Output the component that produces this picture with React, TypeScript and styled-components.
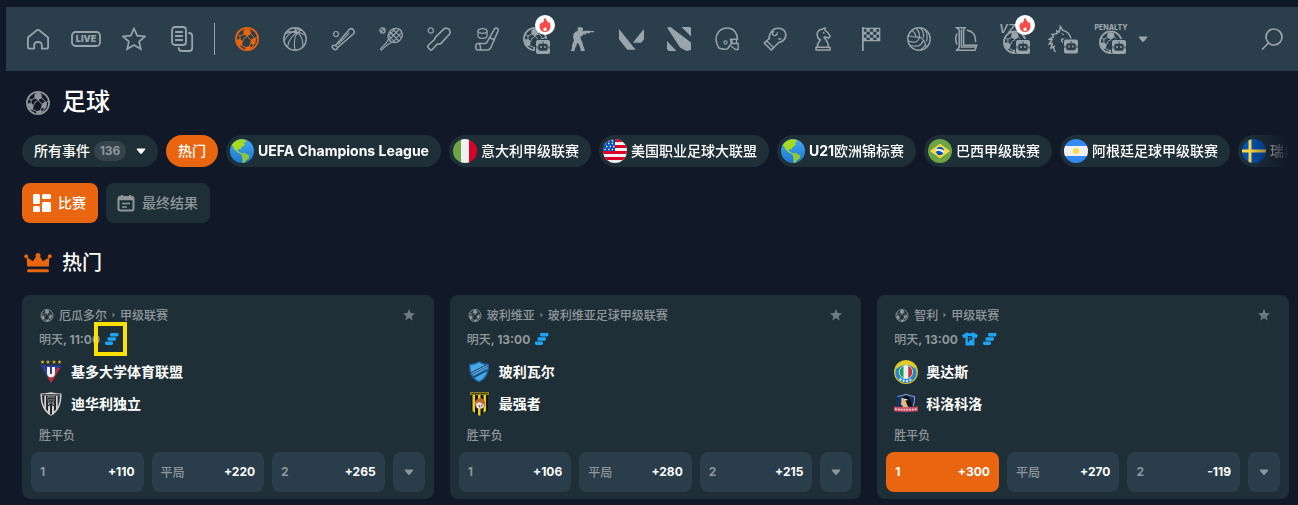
import React from 'react';
import styled, { createGlobalStyle, css } from 'styled-components';
import { SiValorant } from 'react-icons/si';

const color = {
  page: '#111827',
  bar: '#2a3f4b',
  card: '#1f2f38',
  control: '#2a3d4a',
  accent: '#e9650f',
  icon: '#9aa4ab',
  muted: '#8f979b',
  dim: '#6f7a80',
  blue: '#1ea4f7',
};

const GlobalStyle = createGlobalStyle`
  *, *::before, *::after { box-sizing: border-box; }
  body {
    margin: 0;
    background: ${color.page};
    color: #fff;
    font-family: Inter, "Noto Sans CJK SC", sans-serif;
    font-size: 14px;
  }
  h1, h2, p, ul { margin: 0; padding: 0; font-weight: 500; }
  button { font: inherit; color: inherit; border: 0; padding: 0; background: none; cursor: pointer; }
  a { color: inherit; text-decoration: none; }
  svg { display: block; flex: none; }
`;

const Page = styled.div`
  padding: 7px 0 6px 6px;
`;

const NavBar = styled.nav`
  display: flex;
  align-items: center;
  height: 64px;
  padding: 0 2px 0 8px;
  background: ${color.bar};
  color: ${color.icon};
`;

const NavItem = styled.a<{ $active?: boolean }>`
  position: relative;
  display: flex;
  align-items: center;
  justify-content: center;
  flex: none;
  width: 48px;
  height: 48px;
  color: ${(p) => (p.$active ? color.accent : color.icon)};
`;

const NavDivider = styled.span`
  flex: none;
  width: 1px;
  height: 32px;
  margin: 0 8px;
  background: ${color.icon};
`;

const NavMore = styled.button`
  display: flex;
  justify-content: center;
  flex: none;
  width: 16px;
`;

const NavSearch = styled.button`
  display: flex;
  align-items: center;
  justify-content: center;
  width: 48px;
  height: 48px;
  margin-left: auto;
`;

const HotBadge = styled.span`
  position: absolute;
  top: 0;
  right: 4px;
  display: flex;
  align-items: center;
  justify-content: center;
  width: 20px;
  height: 20px;
  border-radius: 50%;
  background: #fff;
`;

const Main = styled.main`
  padding: 0 9px 0 16px;
`;

const TitleRow = styled.div<{ $section?: boolean }>`
  display: flex;
  align-items: center;
  gap: 8px;
  height: ${(p) => (p.$section ? '40px' : '64px')};
  color: ${color.muted};
`;

const TitleIcon = styled.span`
  display: flex;
  justify-content: center;
  width: 32px;
`;

const PageTitle = styled.h1`
  color: #fff;
  font-size: 24px;
  line-height: 32px;
  padding-bottom: 2px;
`;

const SectionTitle = styled.h2`
  color: #fff;
  font-size: 20px;
  line-height: 28px;
`;

const Label = styled.span`
  padding-bottom: 2px;
`;

const ChipRow = styled.div`
  display: flex;
  gap: 8px;
  overflow: hidden;
  mask-image: linear-gradient(to right, #000 calc(100% - 40px), transparent 100%);
`;

const Chip = styled.button<{ $active?: boolean; $icon?: boolean }>`
  display: flex;
  align-items: center;
  gap: 4px;
  flex: none;
  height: 32px;
  padding: ${(p) => (p.$icon ? '0 12px 0 4px' : '0 12px')};
  border-radius: 16px;
  background: ${(p) => (p.$active ? color.accent : color.card)};
  font-weight: 500;
  white-space: nowrap;
`;

const Latin = styled.span`
  font-weight: 700;
`;

const Count = styled.span`
  width: 32px;
  margin-right: 6px;
  border-radius: 10px;
  background: #35434c;
  color: ${color.muted};
  font-weight: 700;
  font-size: 12px;
  line-height: 20px;
  text-align: center;
`;

const TabRow = styled.div`
  display: flex;
  gap: 8px;
  margin: 16px 0 20px;
`;

const Tab = styled.button<{ $active?: boolean }>`
  display: flex;
  align-items: center;
  gap: 4px;
  height: 40px;
  padding: 0 12px 0 8px;
  border-radius: 8px;
  background: ${(p) => (p.$active ? color.accent : color.card)};
  color: ${(p) => (p.$active ? '#fff' : color.muted)};
  font-weight: 500;
`;

const CardGrid = styled.div`
  display: grid;
  grid-template-columns: repeat(3, minmax(0, 1fr));
  gap: 16px;
  margin-top: 12px;
`;

const CardBox = styled.article`
  padding: 8px 9px 7px;
  border-radius: 8px;
  background: ${color.card};
`;

const CardBody = styled.div`
  padding: 0 8px;
`;

const MetaRow = styled.div`
  display: flex;
  align-items: center;
  gap: 4px;
  height: 24px;
  color: ${color.muted};
  font-size: 12px;
  font-weight: 500;
`;

const League = styled.a`
  display: flex;
  align-items: center;
  gap: 4px;
`;

const StarButton = styled.button`
  display: flex;
  margin: 0 2px 0 auto;
  color: ${color.dim};
`;

const Time = styled.span`
  font-weight: 700;
`;

const Marker = styled.span<{ $highlight?: boolean }>`
  position: relative;
  display: flex;
  padding-left: 1px;
  ${(p) =>
    p.$highlight &&
    css`
      &::after {
        content: '';
        position: absolute;
        inset: -11px -8px -11px -10px;
        border: 4px solid #ffe100;
      }
    `}
`;

const Team = styled.div`
  display: flex;
  align-items: center;
  gap: 8px;
  height: 32px;
  font-weight: 600;
`;

const Teams = styled.div`
  margin: 5px 0 4px;
`;

const MarketName = styled.p`
  color: ${color.muted};
  font-size: 12px;
  line-height: 24px;
  margin-bottom: 4px;
`;

const OddsRow = styled.div`
  display: grid;
  grid-template-columns: repeat(3, minmax(0, 1fr)) 32px;
  gap: 8px;
`;

const OddsButton = styled.button<{ $active?: boolean }>`
  display: flex;
  align-items: center;
  justify-content: space-between;
  height: 40px;
  padding: 0 9px;
  border-radius: 8px;
  background: ${(p) => (p.$active ? color.accent : color.control)};
  color: ${(p) => (p.$active ? '#fff' : color.muted)};
  font-size: 12px;
`;

const Outcome = styled(Label)<{ $digit?: boolean }>`
  font-weight: ${(p) => (p.$digit ? 700 : 500)};
`;

const Price = styled(Label)`
  color: #fff;
  font-weight: 700;
`;

const MoreButton = styled.button`
  display: flex;
  align-items: center;
  justify-content: center;
  height: 40px;
  border-radius: 8px;
  background: ${color.control};
  color: ${color.muted};
`;

/* ---------- icons ---------- */

const BallShape = () => (
  <g>
    <circle cx="12" cy="12" r="11.100" fill="none" stroke="currentColor" strokeWidth="1.700" />
    <path
      fill="currentColor"
      d="M8.600 3 12 1.500 15.400 3l.6 4-3.800 2.300L8.300 7.200zM1.500 12.500l4-.6 2.300 2.800-1 4-3.600.3zM15.800 13l3.200-2.600 2 1.600-.5 4.300-2 1.800-3.200-1.600zM10 20.200l4.600-1.300 2.600 1.500-3.200 2.400-3.400-.2z"
    />
    <path
      fill="none"
      stroke="currentColor"
      strokeWidth="1"
      d="M8.600 7.200 5 9v3M5 9 2.200 7.500M16 7l3.200 3.600M20 11.500l2.500-1.500M12.200 9.300 15.800 13M7.600 14.500 9.300 11l3-1.700M6.500 18.500l4 1.800M15.500 16.300l-1 3M18.500 17.800l-1.500 2.700"
    />
  </g>
);

const Ball = ({ size = 24 }: { size?: number }) => (
  <svg width={size} height={size} viewBox="0 0 24 24">
    <BallShape />
  </svg>
);

const Line = ({ children, w = 1.5 }: { children: React.ReactNode; w?: number }) => (
  <svg
    width="24"
    height="24"
    viewBox="0 0 24 24"
    fill="none"
    stroke="currentColor"
    strokeWidth={w}
    strokeLinejoin="round"
    strokeLinecap="round"
  >
    {children}
  </svg>
);

const HomeIcon = () => (
  <Line w={1.8}>
    <path d="M1.900 10.500 10.300 3.600q1.700-1.400 3.400 0l8.400 6.900V20q0 1.600-1.600 1.600h-4.700V18q0-3-3.800-3t-3.800 3v3.600H3.500q-1.600 0-1.600-1.600z" />
  </Line>
);

const LiveIcon = () => (
  <svg width="30" height="16" viewBox="0 0 30 16">
    <rect x="1" y="1" width="28" height="14" rx="3.500" fill="none" stroke="currentColor" strokeWidth="1.800" />
    <text x="15" y="11.200" textAnchor="middle" fontFamily="Inter, sans-serif" fontSize="9" fontWeight="900" fill="currentColor">
      LIVE
    </text>
  </svg>
);

const StarOutline = () => (
  <Line w={1.7}>
    <path d="m12 1.500 3.200 7.100 7.800.8-5.900 5.100 1.700 7.500L12 18l-6.800 4 1.700-7.500L1 9.400l7.800-.8z" strokeLinejoin="miter" />
  </Line>
);

const SlipsIcon = () => (
  <svg width="24" height="26" viewBox="0 0 24 26" fill="none" stroke="currentColor" strokeWidth="1.800" strokeLinecap="round">
    <rect x="2" y="1" width="14" height="18" rx="3" />
    <path d="M5.800 6h6.400M5.800 10h6.400M5.800 14h6.400M19 7q3.200 0 3.200 3v12q0 3-3 3h-7.500q-3 0-3-3" />
  </svg>
);

const BasketballIcon = () => (
  <Line w={1.4}>
    <circle cx="12" cy="12" r="11.200" />
    <path
      d="M3 6.500Q12 2 22 8M1 14Q6 4 17 2.200M4.500 20Q6 9 18.500 3M12 23Q10 12 14 6.500L12 1M15 6Q20 10 20 19.500M5 4.500q6 .5 9.500 2"
      strokeWidth="1.100"
    />
  </Line>
);

const BaseballIcon = () => (
  <Line>
    <circle cx="5" cy="7" r="2.500" strokeWidth="1.200" />
    <path d="M4.500 18.500 18.300 2.500q2-1.800 4 .2t.2 4L7 20.200q-1 2.600-2.700 2.600-.8 0-2-1.200T1 19.500q0-1.500 3.500-1z" />
    <path d="m4.500 18.500 2.500 2M7.500 17.200l10.500-11" strokeWidth="1.100" />
  </Line>
);

const TennisIcon = () => (
  <Line w={1.3}>
    <circle cx="3.500" cy="3.500" r="2.600" />
    <path d="m2 5 3-3" />
    <ellipse cx="16.200" cy="8.500" rx="7.500" ry="6.700" transform="rotate(-42 16.200 8.500)" />
    <path
      d="M9.300 12.500q-1.300 3.500-8 9.300l1.200 1.300q6-6.200 9.600-7.400M10 9l6 6.500M11.500 5.500l8 8M14.500 2.800l7.500 7.500M22 6l-8 9.300M19.500 3l-9 9.500M16 1.800l-6 6.500"
      strokeWidth="1.100"
    />
  </Line>
);

const CricketIcon = () => (
  <Line w={1.6}>
    <circle cx="3.800" cy="3.500" r="2.600" strokeWidth="1.200" />
    <path d="M8.200 10.500 17 1.900q1-.9 2.400-.6l2.600.8 1.100 2.600q.4 1.500-.7 2.600L14 16.400q-1 .9-2.300.7l-1.500-.1-4.700 5.200q-1.200 1.200-2.500.3L1 20.500q-.6-1.400.5-2.500l6-5.500z" />
  </Line>
);

const HockeyIcon = () => (
  <Line w={1.5}>
    <path d="M20 1.200q1.600-.5 2.700.4t.3 2.500L16.500 19q-1.300 4-4.500 4H3q-2.300 0-2.300-3.500T4 16.500h6.500q1 0 1.500-1.300zM4 16.500q2 2 1.500 6.300M15 11l4 1.500" />
    <ellipse cx="7.500" cy="4" rx="4.500" ry="2.300" strokeWidth="1.200" />
    <path d="M3 4v5q0 2.300 4.500 2.300T12 9V4" strokeWidth="1.200" />
  </Line>
);

const BotShape = () => (
  <g>
    <rect x="13.500" y="12.500" width="15" height="15" rx="2.500" fill={color.bar} />
    <rect x="14.500" y="13.500" width="14" height="14" rx="2" fill="currentColor" />
    <rect x="16.800" y="17.300" width="9.400" height="7" rx="1.800" fill={color.bar} />
    <path d="M21.500 15v2.500M15.600 19.500v2.600M27.400 19.500v2.600" stroke={color.bar} />
    <path d="M19.600 19.500v2M23.400 19.500v2" stroke="currentColor" strokeWidth="1.400" />
  </g>
);

const BotBallIcon = () => (
  <svg width="32" height="30" viewBox="-4 -3 32 30">
    <BallShape />
    <g transform="translate(-1.500 -.5)">
      <BotShape />
    </g>
  </svg>
);

const TitledBotBallIcon = ({ title, slanted }: { title: string; slanted?: boolean }) => (
  <svg width="36" height="34" viewBox="0 0 36 34">
    <g transform="translate(6 8.500) scale(.98)">
      <BallShape />
    </g>
    <g transform="translate(4.500 4.500)">
      <BotShape />
    </g>
    <text
      x={slanted ? 2 : 18}
      y={slanted ? 11 : 8}
      textAnchor={slanted ? 'start' : 'middle'}
      fontFamily="Inter, sans-serif"
      fontSize={slanted ? 12 : 7}
      fontStyle={slanted ? 'italic' : 'normal'}
      fontWeight={slanted ? 600 : 800}
      fill="currentColor"
    >
      {title}
    </text>
  </svg>
);

const HorseBotIcon = () => (
  <svg width="30" height="30" viewBox="0 0 30 30">
    <path
      d="M7.500 28Q5 25 6 22.500l-3 1.500 1.300-4.500-3 .5 2.800-4.300-2.800-.3 4.200-2.700L4 10.500l5.200-1L8.800 7l2.500 1 1-5.500L15 6.600q6 1 8 8l.5 3-2 1.200-4.300-3.600-3.500.1Q13 17 16 19.500"
      fill="none"
      stroke="currentColor"
      strokeWidth="1.500"
    />
    <path d="m13.500 9.500 2.500 1.300" stroke="currentColor" />
    <g transform="translate(1.500 2)">
      <BotShape />
    </g>
  </svg>
);

const ShooterIcon = () => (
  <svg width="26" height="24" viewBox="0 0 26 24" fill="currentColor">
    <path d="M7.500.8 10 0l2.700.8.3 2.200-.5 1.200 2.500-.4L20 3.700V4h4v1.200h-4v1h-4.500l.3 1.600-1 .3-.8-1.300-1.800 2.200-1.700.3.4 3.200 1.300 2.500 1 3.800 1.200 3 .4 2.700H10.500l.3-1.500-1.500-5-2-2.300-1 3-1.300 2.500-.5 3.300H1l-.3-.8L1.800 22l.5-4.500L4 13l-1-2.200.5-4L6 4.400l2-.6z" />
  </svg>
);

const DotaIcon = () => (
  <svg width="24" height="24" viewBox="0 0 24 24" fill="currentColor">
    <path d="M0 .5 3.500 0 24 15.500V23l-4.500 1L13 20.500zM14.500 0H23l1 1v8.500zM0 14l9.500 10H2l-2-1.500z" />
  </svg>
);

const LeagueIcon = () => (
  <Line w={1.5}>
    <path
      d="M1.500.8h8.500L8.600 3v15.300h13.200L20 23.200H1.700L4.200 20.500V3zM6.400 3v17h13.800"
      strokeLinejoin="miter"
    />
    <path d="M12.300 3.300Q21 5 20.500 14.500M1.800 7Q-.5 12 1.800 17" />
  </Line>
);

const HelmetIcon = () => (
  <Line w={1.5}>
    <path d="M2 17Q-.5 10 3.500 5 8 .2 14.500 1.300q7.500 1.500 8 11H15.500l.8 4.200-3.500 5q-.8 1-3 .8-5.500-.6-6.300-1.800L2 17z" />
    <circle cx="10.500" cy="15.500" r="1.600" strokeWidth="1.100" />
    <path d="M16.500 16.500H23.200V22.500H20.500L16.500 19.500M17 13v3M21.500 13v3" strokeWidth="1.300" />
  </Line>
);

const GloveIcon = () => (
  <Line w={1.6}>
    <path d="M1.200 16 6.500 11.300q-.8-1 .2-3.300Q8 4.300 11 2.200q3-1.500 6.500-.7 5 1.500 5.300 6 .2 4-3.300 6.500-1.500 1-3.500 1.300L8.300 23z" />
    <path d="m4 14.200 6.800 6.600M10.500 4.500q-2 2.300-.3 3.600t3.600-.6l.7-1.700M15.500 11.800l2.300.2" strokeWidth="1.300" />
  </Line>
);

const ChessIcon = () => (
  <Line w={1.5}>
    <path d="M5 23h14v-2.800H5zM6.300 20q.2-4.500 3.200-7-3.700-2-3.300-6.500Q7 3 11 2.300L14 .8v2.500q3.500 1.700 5.200 6l-1.700 2-3.500-1.500q-1 0-.8 1.200 4.400 4 4 9" />
    <circle cx="12.500" cy="5.800" r=".6" fill="currentColor" strokeWidth=".6" />
  </Line>
);

const FlagIcon = () => (
  <svg width="24" height="24" viewBox="0 0 24 24">
    <path fill="currentColor" d="M3 0h1.700v24H3z" />
    <path fill="none" stroke="currentColor" strokeWidth="1.200" d="M4 1.400h16.700v12.200H4z" />
    <path
      fill="currentColor"
      d="M7.500 1.500h3.300v3.200H7.500zM14.200 1.500h3.300v3.200h-3.300zM4.500 4.700h3v3h-3zM10.800 4.700h3.400v3h-3.400zM17.500 4.700h3v3h-3zM7.500 7.700h3.300v3H7.500zM14.200 7.700h3.300v3h-3.300zM4.500 10.700h3v3h-3zM10.800 10.700h3.400v3h-3.400zM17.500 10.700h3v3h-3z"
    />
  </svg>
);

const VolleyballIcon = () => (
  <Line w={1.4}>
    <circle cx="12" cy="12" r="11.200" />
    <path
      d="M9 1.500q3.800 3 3.500 8.500Q7 10.500 1 8.500M13.500 1q4 4.500 2.800 9.500M18 3q3.500 5 1.500 11M12.500 10q5 2 6.500 9.500M12.500 10q-.8 3.500-3.500 5Q5 15.500 1.500 14M16 14q-1.500 4-5 5Q7 19.500 3.500 18.500M18 18.500q-1.500 2-4 4.200M5 3.800Q8 5 8.800 9.800"
      strokeWidth="1.200"
    />
  </Line>
);

const SearchIcon = () => (
  <Line w={1.7}>
    <circle cx="14" cy="10" r="8" />
    <path d="m8.500 16-6 6" />
  </Line>
);

const Caret = () => (
  <svg width="10" height="10" viewBox="0 0 10 10" fill="currentColor">
    <path d="M1.600 2.500h6.800q1.400 0 .6 1.200L5.900 7.500q-.9.900-1.800 0L1 3.700Q.2 2.500 1.600 2.500z" />
  </svg>
);

const FlameIcon = () => (
  <svg width="12" height="14" viewBox="0 0 12 14">
    <path fill="#ff4a4a" d="M6.500 0Q7 2.500 9 4l.5 1 .9-1.300Q12 7 11.300 10 10 14 6 14T.7 10Q0 6.500 2.300 4l.9 1.500Q5.500 3.200 5 .8z" />
    <path fill="#fff" d="M6.200 8.800Q8 10.500 7.600 11.700 7.200 13 6 13t-1.600-1.300l.3-1.700.8.500z" />
  </svg>
);

const CrownIcon = () => (
  <svg width="28" height="20" viewBox="0 0 28 20" fill={color.accent}>
    <path d="M2.600 4 9 8.200l3.600-5.400h2.800L19 8.200 25.400 4 24.800 13.500H3.200z" />
    <circle cx="2.200" cy="3.200" r="2" />
    <circle cx="14" cy="2.500" r="2.500" />
    <circle cx="25.800" cy="3.200" r="2" />
    <rect x="3" y="16.200" width="22" height="3" rx="1.500" />
  </svg>
);

const BoardIcon = () => (
  <svg width="24" height="24" viewBox="0 0 24 24" fill="currentColor">
    <rect x="3" y="3" width="7" height="10" rx="1.500" />
    <rect x="12" y="3" width="9" height="5" rx="1.500" />
    <rect x="3" y="15" width="7" height="6" rx="1.500" />
    <rect x="12" y="11" width="9" height="10" rx="1.500" />
  </svg>
);

const CalendarIcon = () => (
  <svg width="24" height="24" viewBox="0 0 24 24" fill="none" stroke="currentColor" strokeWidth="2">
    <rect x="4.500" y="6" width="15" height="13.500" rx="2" />
    <path d="M4.500 7.500h15" strokeWidth="3.500" />
    <path d="M7.800 4v3M16.200 4v3" />
    <path d="M8 12.500h8M8 16h5" strokeWidth="1.500" />
  </svg>
);

const StarIcon = () => (
  <svg width="12" height="12" viewBox="0 0 12 12" fill="currentColor">
    <path d="m6 0 1.600 4.100 4.400.3-3.400 2.800 1.100 4.300L6 9.100l-3.700 2.400 1.100-4.300L0 4.400l4.400-.3z" />
  </svg>
);

const Chevron = () => (
  <svg width="5" height="6" viewBox="0 0 5 6" fill={color.dim}>
    <path d="M1.500.5 4 3 1.500 5.500z" />
  </svg>
);

const StreamIcon = () => (
  <svg width="14" height="12" viewBox="0 0 14 12" fill={color.blue}>
    <rect x="5" y="0" width="8.500" height="3.400" rx="1.400" />
    <rect x="2.500" y="4.300" width="8.500" height="3.400" rx="1.400" />
    <rect x="0" y="8.600" width="8" height="3.400" rx="1.400" />
  </svg>
);

const ShirtIcon = () => (
  <svg width="16" height="14" viewBox="0 0 16 14">
    <path fill={color.blue} d="M4.500.5h1.200q2.300 2 4.600 0h1.200L16 3.200l-1.700 3-1.800-.7V13.500h-9V5.500l-1.800.7L0 3.200z" />
    <text x="8" y="10.200" textAnchor="middle" fontFamily="Inter, sans-serif" fontSize="8" fontWeight="800" fill={color.card}>
      P
    </text>
  </svg>
);

/* ---------- round flags ---------- */

const RoundFlag = ({ id, children }: { id: string; children: React.ReactNode }) => (
  <svg width="24" height="24" viewBox="0 0 24 24">
    <clipPath id={id}>
      <circle cx="12" cy="12" r="12" />
    </clipPath>
    <g clipPath={`url(#${id})`}>{children}</g>
  </svg>
);

const Globe = ({ id }: { id: string }) => (
  <RoundFlag id={id}>
    <linearGradient id={`${id}-sea`} x1="0" y1="0" x2="0" y2="1">
      <stop offset="0" stopColor="#45a8f2" />
      <stop offset="1" stopColor="#1c76d0" />
    </linearGradient>
    <path fill={`url(#${id}-sea)`} d="M0 0h24v24H0z" />
    <path fill="#a4dc1c" d="M1.500 6.500Q4 1.500 10 .3l5.500.5.5 2-2.500 1.500 1.500 1.500-3.500 2.500-1 2.200-2-.6-1 1.600 2.500 2 2 .5-.3 1.200-4-1.700L4 9.800l-.5-2z" />
    <path fill="#8cc63f" d="m11 14.500 3.500-.8 5 2.800-.8 3-2.700 2-1.500 2.500h-2l-.3-5.500z" />
  </RoundFlag>
);

const Italy = () => (
  <RoundFlag id="flag-it">
    <path fill="#6da544" d="M0 0h8v24H0z" />
    <path fill="#f0f0f0" d="M8 0h8v24H8z" />
    <path fill="#d80027" d="M16 0h8v24h-8z" />
  </RoundFlag>
);

const Usa = () => (
  <RoundFlag id="flag-us">
    <path fill="#f0f0f0" d="M0 0h24v24H0z" />
    <path fill="#d80027" d="M0 0h24v3H0zM0 6h24v3H0zM0 12h24v3H0zM0 18h24v3H0z" />
    <path fill="#0052b4" d="M0 0h12v12H0z" />
    <path stroke="#f0f0f0" strokeWidth="1.400" strokeDasharray="1.400 2.200" d="M1.500 4.500H12M3 7.500h9M1.500 10.500H12M5 1.800h7" />
  </RoundFlag>
);

const Brazil = () => (
  <RoundFlag id="flag-br">
    <path fill="#6da544" d="M0 0h24v24H0z" />
    <path fill="#ffda44" d="m12 4.700 10 7.300-10 7.300L2 12z" />
    <circle cx="12" cy="12" r="4.200" fill="#f0f0f0" />
    <path fill="#0052b4" d="M9.500 11.800q4 0 6 2.500-1.500 2-3.800 1.900-3-.3-3.700-3.500zM8.300 10Q9.500 7.800 12 7.800q3.700.4 4.200 4-3.500-2.600-7.900-1.800z" />
  </RoundFlag>
);

const Argentina = () => (
  <RoundFlag id="flag-ar">
    <path fill="#338af3" d="M0 0h24v24H0z" />
    <path fill="#f0f0f0" d="M0 7h24v10H0z" />
    <circle cx="12" cy="12" r="3" fill="#ffda44" />
  </RoundFlag>
);

const Sweden = () => (
  <RoundFlag id="flag-se">
    <path fill="#0052b4" d="M0 0h24v24H0z" />
    <path fill="#ffda44" d="M6.500 0h3v24h-3zM0 10.500h24v3H0z" />
  </RoundFlag>
);

/* ---------- club crests ---------- */

const LigaQuito = () => (
  <svg width="24" height="24" viewBox="0 0 24 24">
    <path
      fill="#c7a93c"
      d="m3.500 0 .7 1.300h1.400L4.500 2.400l.4 1.500-1.400-.8-1.400.8.400-1.500L1.400 1.300h1.400zM9 0l.7 1.300h1.400L10 2.400l.4 1.500L9 3.100l-1.400.8.400-1.500-1.100-1.100h1.400zM15 0l.7 1.300h1.400L16 2.400l.4 1.500-1.400-.8-1.400.8.400-1.500-1.100-1.100h1.400zM20.500 0l.7 1.300h1.400l-1.100 1.100.4 1.500-1.400-.8-1.400.8.400-1.500-1.100-1.100h1.400z"
    />
    <path fill="#2f3b9c" d="M1.500 5.200h21L12 23z" />
    <path fill="#c02f35" d="m21.300 8-9.300 15-3.200-5.500L18 8z" />
    <path fill="#f4f4f4" d="M8 7h3v6q0 1.300 1 1.300t1-1.300V7h3v6q0 4.300-4 4.300T8 13z" />
  </svg>
);

const Independiente = () => (
  <svg width="24" height="24" viewBox="0 0 24 24">
    <path fill="#d0d0d0" d="M1.500 1.500Q6 1.500 12 .3q6 1.200 10.500 1.200Q23 18 12 23.800 1 18 1.500 1.500z" />
    <path fill="#25282b" d="M3 3.500h2.300V15Q3 10 3 3.500zM7 4h2v15.500l-2-2zM11 8h2v14l-1 1-1-1zM15 4h2v13.500l-2 2zM18.700 3.500H21Q21 10 18.700 15z" />
    <path fill="#636769" d="M8 5q4-2.500 8 0l-1 6-3 2-3-2z" />
    <path stroke="#25282b" fill="none" strokeWidth="1.200" d="M3 2.800h18M9 6.500h6M10 9h4M8.500 14l3.500-2 3.500 2" />
  </svg>
);

const Bolivar = () => (
  <svg width="24" height="24" viewBox="0 0 24 24">
    <path fill="#1c5f9c" d="M2 4q5.500 0 10-3 4.500 3 10 3 .8 14-10 18.500Q1.200 18 2 4z" />
    <path fill="#49a9e6" d="M3.300 5.200Q8 5 12 2.500q4 2.500 8.700 2.700Q20.700 17 12 21.100 3.300 17 3.300 5.200z" />
    <path stroke="#1c4f86" strokeWidth="2.600" d="M4.500 13.500 20 5.500" />
    <path stroke="#9bcdf0" strokeWidth=".8" d="M4.500 13.700 20 5.700" />
    <path stroke="#1c4f86" strokeWidth="2" d="M6 17.500 20 10" />
  </svg>
);

const Strongest = () => (
  <svg width="24" height="24" viewBox="0 0 24 24">
    <path fill="#17170f" d="M4 3h17v15.500L12 24l-8-5.500z" />
    <path fill="#e6cf1f" d="M5.500 3H8v18l-2.500-2zM11 3h2.500v20.500H11zM16.500 3H19v16l-2.500 2z" />
    <path fill="#8c7f1c" d="M3 0h19v3H3z" />
    <path stroke="#2a270f" d="M4.500 1.500h16" strokeDasharray="2 1" />
    <circle cx="13" cy="11.500" r="5.200" fill="#b96a32" />
    <path fill="#e7dcdc" d="M9 11.500 12.500 10l4.500 2.500-1 3.500-4 1-2.500-1.500z" />
    <path stroke="#5c4650" d="m12 13 1 2.500M15 12.500l-.5 2" />
  </svg>
);

const Audax = () => (
  <svg width="24" height="24" viewBox="0 0 24 24">
    <circle cx="12" cy="12" r="12" fill="#d9c52e" />
    <circle cx="12" cy="12.500" r="10.600" fill="#2785c9" />
    <path fill="#e4cf26" d="M1.500 9.500Q5 1.300 12 1.200t10.500 8.300Q17 4.800 12 4.800T1.500 9.500z" />
    <clipPath id="audax-shield">
      <circle cx="12" cy="12" r="6.700" />
    </clipPath>
    <g clipPath="url(#audax-shield)">
      <path fill="#1b9a55" d="M5 4h5v16H5z" />
      <path fill="#eee" d="M9.500 4h5v16h-5z" />
      <path fill="#d42b35" d="M14.500 4H20v16h-5.500z" />
    </g>
    <circle cx="12" cy="12" r="6.700" fill="none" stroke="#e9e9d0" strokeWidth=".8" />
    <path stroke="#fff" strokeWidth="1.800" fill="none" strokeDasharray="2 1.500" d="M5.500 18.800q6.500 4.500 13 0" />
  </svg>
);

const ColoColo = () => (
  <svg width="24" height="24" viewBox="0 0 24 24">
    <path fill="#16305f" d="M2 3.500q6-.5 10-2.500 4 2 10 2.500Q22.500 18 12 22.500 1.500 18 2 3.500z" />
    <path fill="none" stroke="#b9c3d6" strokeWidth=".8" d="M3.500 4.500Q8 4 12 2.200q4 1.800 8.500 2.300Q21 13 17 17" />
    <path fill="#111" d="M8 6q3-3.500 7-1 1.500 4 4 10l-6-2-3-4z" />
    <path fill="#e5b97f" d="m7.500 7 4 1 1.500 5 2 3H8l1-2.500-2-.5z" />
    <path stroke="#fff" strokeWidth="1.200" d="m7.500 6.500 6 1.500" />
    <path fill="#c44a5c" d="M0 14.500q12 1.500 24 0v4.800q-12 1.500-24 0z" />
    <path stroke="#f0ced4" strokeWidth="1.800" strokeDasharray="1.800 1" fill="none" d="M1 17.200q11 1 22 0" />
  </svg>
);

/* ---------- data ---------- */

type NavEntry = { label: string; icon: React.ReactNode; active?: boolean; hot?: boolean };

const shortcuts: NavEntry[] = [
  { label: '首页', icon: <HomeIcon /> },
  { label: '滚球', icon: <LiveIcon /> },
  { label: '收藏', icon: <StarOutline /> },
  { label: '投注单', icon: <SlipsIcon /> },
];

const sports: NavEntry[] = [
  { label: '足球', icon: <Ball />, active: true },
  { label: '篮球', icon: <BasketballIcon /> },
  { label: '棒球', icon: <BaseballIcon /> },
  { label: '网球', icon: <TennisIcon /> },
  { label: '板球', icon: <CricketIcon /> },
  { label: '冰球', icon: <HockeyIcon /> },
  { label: '电子足球', icon: <BotBallIcon />, hot: true },
  { label: 'Counter-Strike', icon: <ShooterIcon /> },
  { label: 'Valorant', icon: <SiValorant size={25} /> },
  { label: 'Dota 2', icon: <DotaIcon /> },
  { label: '美式足球', icon: <HelmetIcon /> },
  { label: '拳击', icon: <GloveIcon /> },
  { label: '国际象棋', icon: <ChessIcon /> },
  { label: '赛车', icon: <FlagIcon /> },
  { label: '排球', icon: <VolleyballIcon /> },
  { label: 'League of Legends', icon: <LeagueIcon /> },
  { label: '虚拟足球', icon: <TitledBotBallIcon title="VZ" slanted />, hot: true },
  { label: '虚拟赛马', icon: <HorseBotIcon /> },
  { label: '点球', icon: <TitledBotBallIcon title="PENALTY" /> },
];

const leagues: { icon: React.ReactNode; latin?: string; name?: string }[] = [
  { icon: <Globe id="globe-ucl" />, latin: 'UEFA Champions League' },
  { icon: <Italy />, name: '意大利甲级联赛' },
  { icon: <Usa />, name: '美国职业足球大联盟' },
  { icon: <Globe id="globe-u21" />, latin: 'U21', name: '欧洲锦标赛' },
  { icon: <Brazil />, name: '巴西甲级联赛' },
  { icon: <Argentina />, name: '阿根廷足球甲级联赛' },
  { icon: <Sweden />, name: '瑞典超级联赛' },
];

type Match = {
  country: string;
  league: string;
  time: string;
  shirt?: boolean;
  highlight?: boolean;
  teams: { name: string; crest: React.ReactNode }[];
  odds: [string, string, string];
  picked?: number;
};

const matches: Match[] = [
  {
    country: '厄瓜多尔',
    league: '甲级联赛',
    time: '11:00',
    highlight: true,
    teams: [
      { name: '基多大学体育联盟', crest: <LigaQuito /> },
      { name: '迪华利独立', crest: <Independiente /> },
    ],
    odds: ['+110', '+220', '+265'],
  },
  {
    country: '玻利维亚',
    league: '玻利维亚足球甲级联赛',
    time: '13:00',
    teams: [
      { name: '玻利瓦尔', crest: <Bolivar /> },
      { name: '最强者', crest: <Strongest /> },
    ],
    odds: ['+106', '+280', '+215'],
  },
  {
    country: '智利',
    league: '甲级联赛',
    time: '13:00',
    shirt: true,
    teams: [
      { name: '奥达斯', crest: <Audax /> },
      { name: '科洛科洛', crest: <ColoColo /> },
    ],
    odds: ['+300', '+270', '-119'],
    picked: 0,
  },
];

const outcomes = ['1', '平局', '2'];

const NavLink = ({ entry }: { entry: NavEntry }) => (
  <NavItem href="#" aria-label={entry.label} $active={entry.active}>
    {entry.icon}
    {entry.hot && (
      <HotBadge>
        <FlameIcon />
      </HotBadge>
    )}
  </NavItem>
);

const MatchCard = ({ match }: { match: Match }) => (
  <CardBox>
    <CardBody>
      <MetaRow>
        <League href="#">
          <svg width="16" height="13" viewBox="-2 0 28 24">
            <BallShape />
          </svg>
          <Label>{match.country}</Label>
          <Chevron />
          <Label>{match.league}</Label>
        </League>
        <StarButton aria-label="收藏">
          <StarIcon />
        </StarButton>
      </MetaRow>
      <MetaRow>
        <Label>
          明天<Time>, {match.time}</Time>
        </Label>
        {match.shirt && <ShirtIcon />}
        <Marker $highlight={match.highlight}>
          <StreamIcon />
        </Marker>
      </MetaRow>
      <Teams>
        {match.teams.map((team) => (
          <Team key={team.name}>
            {team.crest}
            <Label>{team.name}</Label>
          </Team>
        ))}
      </Teams>
      <MarketName>胜平负</MarketName>
    </CardBody>
    <OddsRow>
      {outcomes.map((outcome, i) => (
        <OddsButton key={outcome} $active={match.picked === i}>
          <Outcome $digit={outcome.length === 1}>{outcome}</Outcome>
          <Price>{match.odds[i]}</Price>
        </OddsButton>
      ))}
      <MoreButton aria-label="更多">
        <Caret />
      </MoreButton>
    </OddsRow>
  </CardBox>
);

export default function App() {
  return (
    <Page>
      <GlobalStyle />
      <NavBar>
        {shortcuts.map((entry) => (
          <NavLink key={entry.label} entry={entry} />
        ))}
        <NavDivider />
        {sports.map((entry) => (
          <NavLink key={entry.label} entry={entry} />
        ))}
        <NavMore aria-label="更多">
          <Caret />
        </NavMore>
        <NavSearch aria-label="搜索">
          <SearchIcon />
        </NavSearch>
      </NavBar>
      <Main>
        <TitleRow>
          <TitleIcon>
            <Ball />
          </TitleIcon>
          <PageTitle>足球</PageTitle>
        </TitleRow>
        <ChipRow>
          <Chip>
            <Label>所有事件</Label>
            <Count>136</Count>
            <Caret />
          </Chip>
          <Chip $active>
            <Label>热门</Label>
          </Chip>
          {leagues.map((league) => (
            <Chip key={`${league.latin}${league.name}`} $icon>
              {league.icon}
              <Label>
                {league.latin && <Latin>{league.latin}</Latin>}
                {league.name}
              </Label>
            </Chip>
          ))}
        </ChipRow>
        <TabRow>
          <Tab $active>
            <BoardIcon />
            <Label>比赛</Label>
          </Tab>
          <Tab>
            <CalendarIcon />
            <Label>最终结果</Label>
          </Tab>
        </TabRow>
        <TitleRow $section>
          <TitleIcon>
            <CrownIcon />
          </TitleIcon>
          <SectionTitle>热门</SectionTitle>
        </TitleRow>
        <CardGrid>
          {matches.map((match) => (
            <MatchCard key={match.country} match={match} />
          ))}
        </CardGrid>
      </Main>
    </Page>
  );
}
